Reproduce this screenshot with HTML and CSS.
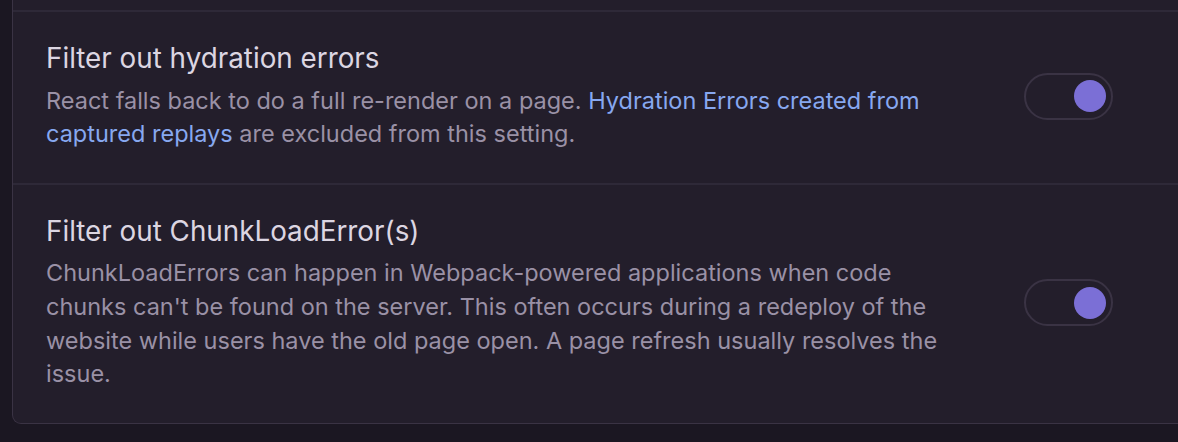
FILE: index.html
```html
<!DOCTYPE html>
<html lang="en">
<head>
  <meta charset="UTF-8" />
  <meta name="viewport" content="width=device-width, initial-scale=1.0"/>
  <title>Inbound Filters</title>
  <link rel="stylesheet" href="styles.css">
</head>
<body>
  <div class="panel">
    <div class="panel-stub"></div>

    <div class="field">
      <div class="field-text">
        <div class="field-label">Filter out hydration errors</div>
        <div class="field-help">
          React falls back to do a full re-render on a page.
          <a href="#">Hydration Errors created from captured replays</a>
          are excluded from this setting.
        </div>
      </div>
      <button class="switch" aria-pressed="true"><span class="switch-knob"></span></button>
    </div>

    <div class="field">
      <div class="field-text">
        <div class="field-label">Filter out ChunkLoadError(s)</div>
        <div class="field-help">
          ChunkLoadErrors can happen in Webpack-powered applications when code chunks can't be found on the server. This often occurs during a redeploy of the website while users have the old page open. A page refresh usually resolves the issue.
        </div>
      </div>
      <button class="switch" aria-pressed="true"><span class="switch-knob"></span></button>
    </div>
  </div>
</body>
</html>
```

FILE: styles.css
```css
body {
  margin: 0;
  background: #1b1722;
  font-family: 'Inter', 'Noto Sans', sans-serif;
  overflow: hidden;
}

.panel {
  margin-left: 12px;
  width: 1200px;
  background: #231e2b;
  border: 1px solid #3a3344;
  border-top: none;
  border-radius: 0 0 9px 9px;
}

.panel-stub {
  height: 10px;
  border-bottom: 2px solid #2e2938;
}

.field {
  display: flex;
  align-items: center;
  padding: 30px 100px 32px 33px;
  border-bottom: 2px solid #2e2938;
}

.field:last-child {
  border-bottom: none;
}

.field-text {
  flex: 0 0 900px;
}

.field-label {
  font-size: 27.8px;
  line-height: 33.6px;
  color: #dcd6e2;
  margin-bottom: 8px;
}

.field-help {
  font-size: 23.5px;
  line-height: 33.6px;
  color: #9a91a6;
}

.field-help a {
  color: #87a8f0;
  text-decoration: none;
}

.switch {
  margin-left: auto;
  width: 89px;
  height: 47px;
  padding: 0 5px;
  display: flex;
  align-items: center;
  justify-content: flex-end;
  background: transparent;
  border: 2px solid #3a3344;
  border-radius: 24px;
  cursor: pointer;
}

.switch-knob {
  width: 32px;
  height: 32px;
  border-radius: 50%;
  background: #7b6fd6;
}
```
